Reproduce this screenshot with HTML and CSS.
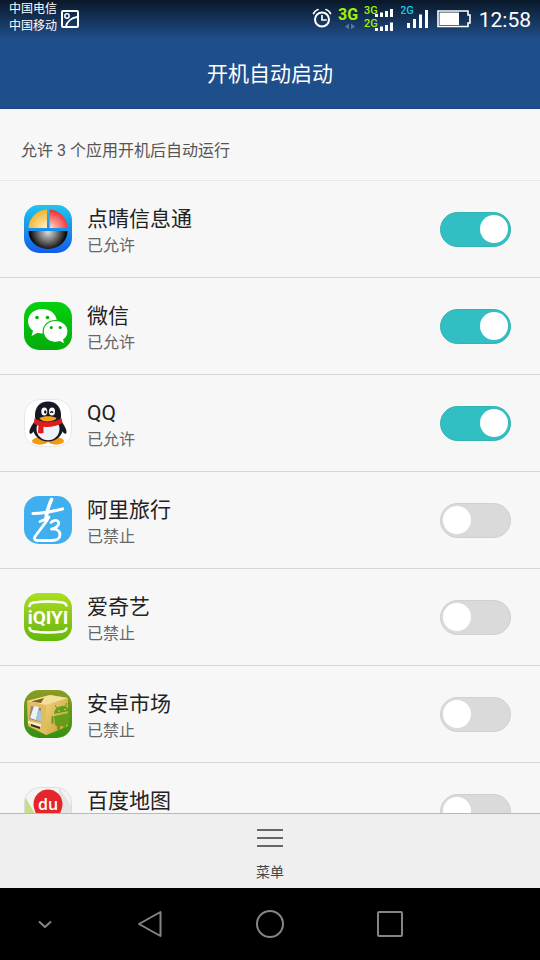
FILE: index.html
```html
<!DOCTYPE html>
<html lang="zh-CN">
<head>
<meta charset="utf-8">
<meta name="viewport" content="width=device-width, initial-scale=1">
<title>开机自动启动</title>
<link rel="stylesheet" href="styles.css">
</head>
<body>
<header class="header">
  <div class="status">
    <div class="carriers"><span>中国电信</span><span>中国移动</span></div>
    <svg class="shot" width="18" height="18" viewBox="0 0 18 18" fill="none" stroke="#fff" stroke-width="2"><rect x="1" y="1" width="16" height="16" rx="1"/><circle cx="6" cy="6" r="2.2" stroke-width="1.5"/><path d="M5 16C6 12 10 8 16 7" stroke-width="1.8"/></svg>
    <div class="signals">
      <svg width="20" height="36" viewBox="0 0 20 36" fill="none" stroke="#fff" stroke-width="2" stroke-linecap="round"><circle cx="10" cy="19.500" r="7"/><path d="M10 15.500V20h4M1.500 13.500Q3 10.500 6 9.500M18.500 13.500Q17 10.500 14 9.500" stroke-width="1.700"/></svg>
      <svg class="net" width="20" height="36" viewBox="0 0 20 36"><text class="net-big" x="0" y="20" fill="#a4ef08">3G</text><path d="M11 23.500v6L7 26.500zM13 23.500v6l4-3z" fill="#53779f"/></svg>
      <svg class="net" width="31" height="36" viewBox="0 0 31 36"><text x="0" y="14" fill="#a4ef08">3G</text><text x="0" y="27" fill="#a4ef08">2G</text><path d="M11 14h3v3h-3zM16 12.500h3V17h-3zM21 11h3v6h-3zM26 9h3v8h-3zM11 28h3v3h-3zM16 26.500h3V31h-3zM21 25h3v6h-3zM26 22.500h3V31h-3z" fill="#fff"/></svg>
      <svg class="net" width="29" height="36" viewBox="0 0 29 36"><text x="-1" y="14" fill="#1bcbe8">2G</text><path d="M6 23h3v5H6zM12 19h3v9h-3zM18 14.500h3V28h-3zM24 10h3v18h-3z" fill="#fff"/></svg>
      <svg width="37" height="36" viewBox="0 0 37 36"><path d="M2 11h30v4h2v8h-2v3.500H2z" fill="none" stroke="#fff" stroke-width="1.600"/><path d="M3.500 12.500H23v12.500H3.500z" fill="#fff"/></svg>
      <time class="clock">12:58</time>
    </div>
  </div>
  <h1 class="title">开机自动启动</h1>
</header>

<main class="content">
  <p class="summary">允许 3 个应用开机后自动运行</p>
  <ul class="apps">
    <li><label class="app">
      <svg class="icon" viewBox="0 0 48 48">
        <defs>
          <linearGradient id="eyeBg" x2="0" y2="1"><stop stop-color="#20c5ee"/><stop offset="1" stop-color="#145ce8"/></linearGradient>
          <radialGradient id="eyeY" gradientUnits="userSpaceOnUse" cx="22" cy="23" r="20"><stop stop-color="#fff1c9"/><stop offset="1" stop-color="#f5ad18"/></radialGradient>
          <radialGradient id="eyeR" gradientUnits="userSpaceOnUse" cx="27" cy="23" r="18"><stop stop-color="#ffd5c9"/><stop offset="1" stop-color="#f12c30"/></radialGradient>
          <radialGradient id="eyeK" gradientUnits="userSpaceOnUse" cx="24" cy="27" r="18"><stop stop-color="#ddd"/><stop offset=".5" stop-color="#777"/><stop offset="1" stop-color="#0c0c0c"/></radialGradient>
        </defs>
        <rect width="48" height="48" rx="15" fill="url(#eyeBg)"/>
        <path d="M23 4.500V23H4.500A19.500 19 0 0 1 23 4.500z" fill="url(#eyeY)"/>
        <path d="M25.500 4.500V23h18A19.500 19 0 0 0 25.500 4.500z" fill="url(#eyeR)"/>
        <path d="M4.500 26h39a19.500 18 0 0 1-39 0z" fill="url(#eyeK)"/>
      </svg>
      <span class="text"><span class="name">点晴信息通</span><span class="state">已允许</span></span>
      <input class="switch" type="checkbox" role="switch" checked>
    </label></li>
    <li><label class="app">
      <svg class="icon" viewBox="0 0 48 48">
        <defs><linearGradient id="wx" x2="0" y2="1"><stop stop-color="#06d00f"/><stop offset="1" stop-color="#04ac0b"/></linearGradient></defs>
        <rect width="48" height="48" rx="15" fill="url(#wx)"/>
        <path d="M18.500 7C10 7 4 12.500 4 19.300c0 4 2 7.300 5 9.500L7.500 34l6-3.200c1.600.5 3.300.8 5 .8 8 0 14.300-5.200 14.300-12.200S26.500 7 18.500 7z" fill="#fff"/>
        <path d="M31.500 18.500c-7 0-12.300 4.700-12.300 10.800s5.300 11 12.300 11c1.600 0 3-.2 4.300-.7l5.200 2.800-1.300-4.600c2.700-2 4.300-5 4.300-8.500 0-6-5.500-10.800-12.500-10.800z" fill="#fff" stroke="#09b811" stroke-width="1.200"/>
        <g fill="#07af11"><circle cx="13" cy="15.500" r="1.800"/><circle cx="23.500" cy="15.500" r="1.800"/><circle cx="27.300" cy="25.500" r="1.600"/><circle cx="36.200" cy="25.500" r="1.600"/></g>
      </svg>
      <span class="text"><span class="name">微信</span><span class="state">已允许</span></span>
      <input class="switch" type="checkbox" role="switch" checked>
    </label></li>
    <li><label class="app">
      <svg class="icon" viewBox="0 0 48 48">
        <rect x=".5" y=".5" width="47" height="47" rx="15" fill="#fff" stroke="#e8e8e8"/>
        <ellipse cx="16" cy="42" rx="8" ry="3.700" fill="#f29a13"/><ellipse cx="32" cy="42" rx="8" ry="3.700" fill="#f29a13"/>
        <path d="M11 22C7 27 4.500 32 5.800 34.500c1.500 1 3-1 4.500-3zM37 22c4 5 6.500 10 5.200 12.500-1.500 1-3-1-4.500-3z" fill="#151a25"/>
        <ellipse cx="24" cy="29" rx="15" ry="13.500" fill="#151a25"/>
        <ellipse cx="24" cy="30" rx="11.500" ry="11.300" fill="#eef2fa"/>
        <path d="M24 2.500c-8.500 0-13 6-13 13.500 0 2 0 4 1 5 7 4 17 4 24 0 1-1 1-3 1-5C37 8.500 32.500 2.500 24 2.500z" fill="#151a25"/>
        <ellipse cx="20.300" cy="12.500" rx="3" ry="4" fill="#fff"/><ellipse cx="28" cy="12.500" rx="3" ry="4" fill="#fff"/>
        <ellipse cx="21.300" cy="13" rx="1.200" ry="1.800" fill="#111"/><path d="M26.500 14q1-3 2.500 0" fill="none" stroke="#111" stroke-width="1.300"/>
        <path d="M10.500 19c7 5.500 20 5.500 27 0l1 5c-6 3.500-13 4.500-19 3.800V34c-2 .8-4 .5-5.500-.3l.5-7-4.500-2z" fill="#de1d20"/>
        <path d="M15.500 19c4-2.300 13-2.300 17 0-1 4-15.500 5-17 0z" fill="#f5a51a"/>
      </svg>
      <span class="text"><span class="name">QQ</span><span class="state">已允许</span></span>
      <input class="switch" type="checkbox" role="switch" checked>
    </label></li>
    <li><label class="app">
      <svg class="icon" viewBox="0 0 48 48">
        <rect width="48" height="48" rx="15" fill="#40aff0"/>
        <g fill="none" stroke="#fff" stroke-linecap="round" stroke-linejoin="round"><path d="M9 17.500Q20 17.500 38.500 13" stroke-width="3.200"/><path d="M27.500 3.500Q23.500 12 22 22" stroke-width="3.600"/><path d="M16 25.500Q21 24 25 21C21 28 15 35 11 40.500c-1.500 2.500 0 4 2.500 4H28c4.500 0 8-2 8-6 0-3.700-4-6-8.500-5.500 5-1 8-4 7-7-1-2.500-5-2-7.500.5" stroke-width="2.800"/></g>
      </svg>
      <span class="text"><span class="name">阿里旅行</span><span class="state">已禁止</span></span>
      <input class="switch" type="checkbox" role="switch">
    </label></li>
    <li><label class="app">
      <svg class="icon iqiyi" viewBox="0 0 48 48">
        <defs><linearGradient id="qy" x2="0" y2="1"><stop stop-color="#a9e021"/><stop offset=".5" stop-color="#8bc51c"/><stop offset="1" stop-color="#62ba08"/></linearGradient></defs>
        <rect width="48" height="48" rx="15" fill="url(#qy)"/>
        <path d="M5.500 14c0-3 1-4 4-4.500 9-1.300 20-1.300 29 0 3 .5 4 1.500 4 4M5.500 34c0 3 1 4 4 4.500 9 1.300 20 1.300 29 0 3-.5 4-1.500 4-4" fill="none" stroke="#fff" stroke-width="2.500"/>
        <text x="24" y="31" text-anchor="middle">iQIYI</text>
      </svg>
      <span class="text"><span class="name">爱奇艺</span><span class="state">已禁止</span></span>
      <input class="switch" type="checkbox" role="switch">
    </label></li>
    <li><label class="app">
      <svg class="icon" viewBox="0 0 48 48">
        <defs><linearGradient id="mk" x2="0" y2="1"><stop stop-color="#8b9c24"/><stop offset="1" stop-color="#319210"/></linearGradient><linearGradient id="box" x2="1" y2="1"><stop stop-color="#edd27a"/><stop offset="1" stop-color="#c99b34"/></linearGradient><clipPath id="mkClip"><rect width="48" height="48" rx="15"/></clipPath></defs>
        <g clip-path="url(#mkClip)">
        <rect width="48" height="48" fill="url(#mk)"/>
        <path d="M3 11 26 5l18 3v28L22 45 4 36z" fill="#e1bd60"/>
        <path d="M3 11 26 5l18 3-22 7z" fill="#f2df9a"/><path d="M7 11.500 20 8l-3 5z" fill="#806020"/>
        <path d="M22 15 44 8v28L22 45z" fill="url(#box)"/>
        <path d="M7 16l10 2v14L5 29z" fill="#9a8964"/><path d="m10 16 5 1-3 13-6-2z" fill="#e9f1fa"/><path d="m14 20 3 1v11l-5-2z" fill="#a4c4d9"/><path d="M4 31l13 3v3L4 33z" fill="#f7edcb"/><path d="M7 34l9 3v2l-9-3z" fill="#2d2b20"/>
        <g fill="#649d18"><path d="M30 24c0-9 14-11 15-3zM30 26l15-3v10c0 2-12 5-14 2z"/><rect x="27.500" y="26" width="2" height="8" rx="1"/><rect x="33" y="33" width="3" height="7" rx="1.500"/><rect x="39" y="31" width="3" height="7" rx="1.500"/></g><path d="m33 18-2-3M41 17l2-4" stroke="#649d18"/><circle cx="35" cy="21" r=".8" fill="#eed889"/><circle cx="41" cy="19.500" r=".8" fill="#eed889"/>
        </g>
      </svg>
      <span class="text"><span class="name">安卓市场</span><span class="state">已禁止</span></span>
      <input class="switch" type="checkbox" role="switch">
    </label></li>
    <li><label class="app">
      <svg class="icon baidu" viewBox="0 0 48 48">
        <defs><clipPath id="bdClip"><rect x=".5" y=".5" width="47" height="47" rx="15"/></clipPath></defs>
        <g clip-path="url(#bdClip)"><rect width="48" height="48" fill="#f4f4f4"/><path d="M0 8 14 32v16H0z" fill="#c3df87"/><path d="M0 24 10 30v18H0z" fill="#f8dd70"/><path d="M35 0 48 20v28L34 28z" fill="#e3e5e5"/></g>
        <rect x=".5" y=".5" width="47" height="47" rx="15" fill="none" stroke="#ddd"/>
        <path d="M24 2.500a14.500 14.500 0 0 1 14.500 14.500C38.500 28 24 44 24 44S9.500 28 9.500 17A14.500 14.500 0 0 1 24 2.500z" fill="#e6252a"/>
        <text x="24" y="22.500" text-anchor="middle">du</text>
      </svg>
      <span class="text"><span class="name">百度地图</span><span class="state">已禁止</span></span>
      <input class="switch" type="checkbox" role="switch">
    </label></li>
  </ul>
</main>

<footer class="toolbar">
  <button class="menu" type="button">
    <svg width="26" height="20" viewBox="0 0 26 20" stroke="#666" stroke-width="2"><path d="M0 2h26M0 10h26M0 18h26"/></svg>
    <span>菜单</span>
  </button>
</footer>

<nav class="nav">
  <button type="button" aria-label="收起"><svg width="30" height="30" viewBox="0 0 30 30"><path d="m9 12.500 6 5.500 6-5.500"/></svg></button>
  <button type="button" aria-label="返回"><svg width="30" height="30" viewBox="0 0 30 30"><path d="M25.500 3v24L4 15z"/></svg></button>
  <button type="button" aria-label="主页"><svg width="30" height="30" viewBox="0 0 30 30"><circle cx="15" cy="15" r="13"/></svg></button>
  <button type="button" aria-label="最近任务"><svg width="30" height="30" viewBox="0 0 30 30"><rect x="3" y="3" width="24" height="24" rx="1"/></svg></button>
</nav>
</body>
</html>
```

FILE: styles.css
```css
* {
  box-sizing: border-box;
}

body {
  margin: 0;
  height: 100vh;
  display: flex;
  flex-direction: column;
  background: #f7f7f7;
  color: #222;
  font-family: Roboto, "Noto Sans CJK SC", sans-serif;
}

button {
  padding: 0;
  border: 0;
  background: none;
  color: inherit;
  font: inherit;
}

svg {
  display: block;
  flex: none;
}

.header {
  flex: none;
  background: linear-gradient(#0a1829, #1f4f8b 40px);
  border-bottom: 1px solid #1c4384;
  color: #fff;
}

.status {
  display: flex;
  align-items: flex-start;
  height: 40px;
  padding: 0 9px;
}

.carriers {
  display: flex;
  flex-direction: column;
  padding-top: 1px;
  font-size: 12px;
  line-height: 17px;
}

.shot {
  margin: 10px 0 0 4px;
}

.signals {
  display: flex;
  gap: 6px;
  margin-left: auto;
}

.net text {
  font-size: 11px;
  font-weight: 500;
}

.net .net-big {
  font-size: 16px;
  font-weight: 700;
}

.clock {
  font-size: 21px;
  line-height: 40px;
}

.title {
  margin: 0;
  padding: 18px 0;
  font-size: 21px;
  font-weight: 400;
  line-height: 32px;
  text-align: center;
}

.content {
  flex: 1;
  min-height: 0;
  overflow: hidden;
}

.summary {
  margin: 0;
  padding: 30px 21px 17px;
  border-bottom: 1px solid #e6e6e6;
  color: #555;
  font-size: 16px;
  line-height: 24px;
}

.apps {
  margin: 0;
  padding: 0;
  list-style: none;
}

.app {
  display: flex;
  align-items: center;
  height: 97px;
  padding: 0 29px 0 24px;
  border-bottom: 1px solid #d6d6d6;
}

.icon {
  width: 48px;
  height: 48px;
}

.iqiyi text {
  fill: #fff;
  font-size: 19px;
  font-weight: 700;
}

.baidu text {
  fill: #fff;
  font: 600 16px "Open Sans", sans-serif;
}

.text {
  display: flex;
  flex: 1;
  flex-direction: column;
  padding: 4px 0 0 15px;
}

.name {
  font-size: 21px;
  line-height: 30px;
}

.state {
  color: #666;
  font-size: 16px;
  line-height: 24px;
}

.switch {
  flex: none;
  width: 71px;
  height: 35px;
  margin: 0;
  padding: 2px;
  appearance: none;
  display: flex;
  align-items: center;
  border: 1px solid #d0d0d0;
  border-radius: 18px;
  background: #dadada;
}

.switch::before {
  content: "";
  width: 28px;
  height: 28px;
  border-radius: 50%;
  background: #fff;
}

.switch:checked {
  justify-content: flex-end;
  border-color: #35b3b0;
  background: #32bfc3;
}

.toolbar {
  flex: none;
  display: flex;
  justify-content: center;
  height: 75px;
  border-top: 1px solid #b9b9b9;
  background: #efefef;
}

.menu {
  display: flex;
  flex-direction: column;
  align-items: center;
  gap: 14px;
  padding-top: 14px;
  color: #444;
  font-size: 14px;
  line-height: 20px;
}

.nav {
  flex: none;
  display: grid;
  grid-template-columns: 3fr 4fr 4fr 4fr 3fr;
  height: 72px;
  background: #000;
}

.nav button {
  display: flex;
  align-items: center;
  justify-content: center;
}

.nav svg {
  fill: none;
  stroke: #858585;
  stroke-width: 2;
  stroke-linejoin: round;
}
```
